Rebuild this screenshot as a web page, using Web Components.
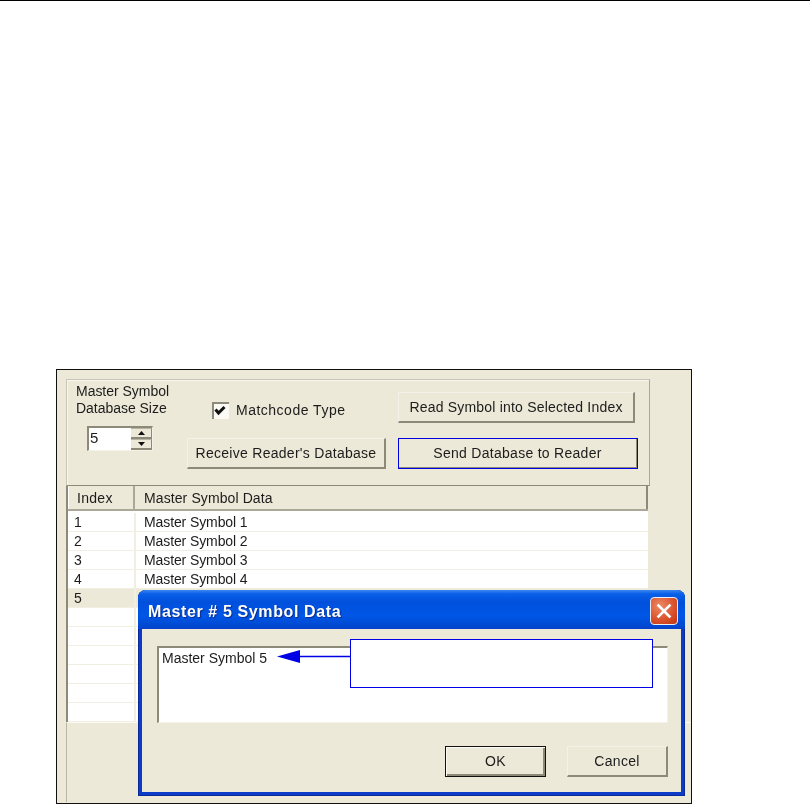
<!DOCTYPE html>
<html>
<head>
<meta charset="utf-8">
<title>Master Symbol Database</title>
<style>
  html, body { margin: 0; background: #fff; }
  body { font: 14px "Liberation Sans", Arial, sans-serif; color: #1c1c1c; height: 804px; overflow: hidden; }
</style>
</head>
<body>
<app-page>
  <legacy-window>
    <db-options></db-options>
    <symbol-table>
      <symbol-row index="1">Master Symbol 1</symbol-row>
      <symbol-row index="2">Master Symbol 2</symbol-row>
      <symbol-row index="3">Master Symbol 3</symbol-row>
      <symbol-row index="4">Master Symbol 4</symbol-row>
      <symbol-row index="5" selected></symbol-row>
      <symbol-row></symbol-row>
      <symbol-row></symbol-row>
      <symbol-row></symbol-row>
      <symbol-row></symbol-row>
      <symbol-row></symbol-row>
      <symbol-row></symbol-row>
    </symbol-table>
    <symbol-dialog heading="Master # 5 Symbol Data">Master Symbol 5</symbol-dialog>
  </legacy-window>
</app-page>

<script>
class AppPage extends HTMLElement {
  connectedCallback() {
    this.attachShadow({ mode: 'open' });
    this.shadowRoot.innerHTML = `
      <style>
        :host { display: block; }
        .rule { height: 1px; background: #000; }
        .content { padding: 368px 0 0 56px; }
      </style>
      <div class="rule"></div>
      <div class="content"><slot></slot></div>
    `;
  }
}

class LegacyWindow extends HTMLElement {
  connectedCallback() {
    this.attachShadow({ mode: 'open' });
    this.shadowRoot.innerHTML = `
      <style>
        :host {
          display: flex;
          flex-direction: column;
          position: relative;
          box-sizing: border-box;
          width: 636px;
          height: 435px;
          padding: 9px 0 0 9px;
          background: #ece9d8;
          border: 1px solid #111;
          filter: blur(0.35px);
        }
      </style>
      <slot></slot>
    `;
  }
}

class WinButton extends HTMLElement {
  connectedCallback() {
    this.attachShadow({ mode: 'open' });
    this.shadowRoot.innerHTML = `
      <style>
        :host {
          display: flex;
          align-items: center;
          justify-content: center;
          box-sizing: border-box;
          height: 31px;
          padding-bottom: 1px;
          background: #ece9d8;
          border-top: 1px solid #f4f2e8;
          border-left: 1px solid #f4f2e8;
          border-right: 2px solid #8d8a7a;
          border-bottom: 2px solid #8d8a7a;
          letter-spacing: var(--track, 0.28px);
        }
        :host([focused]) { outline: 1px solid #0000e6; outline-offset: -1px; }
        :host([default]) {
          border: 1px solid #111;
          box-shadow: inset 1px 1px 0 #fbfaf5, inset -2px -2px 0 #8d8a7a;
        }
      </style>
      <slot></slot>
    `;
  }
}

class SpinBox extends HTMLElement {
  connectedCallback() {
    this.attachShadow({ mode: 'open' });
    this.shadowRoot.innerHTML = `
      <style>
        :host {
          display: flex;
          box-sizing: border-box;
          width: 66px;
          height: 25px;
          background: #fff;
          border-top: 2px solid #8d8a7a;
          border-left: 2px solid #8d8a7a;
          border-right: 1px solid #f4f2e8;
          border-bottom: 1px solid #f4f2e8;
        }
        .value { flex: 1; padding-left: 1px; line-height: 20px; font-size: 15px; }
        .arrows { width: 21px; display: flex; flex-direction: column; }
        .arrows div {
          flex: 1;
          display: flex;
          align-items: center;
          justify-content: center;
          background: #ece9d8;
          border-top: 1px solid #b8b5a5;
          border-right: 1px solid #8d8a7a;
          border-bottom: 2px solid #8d8a7a;
        }
        svg { display: block; }
      </style>
      <div class="value"><slot></slot></div>
      <div class="arrows">
        <div><svg width="7" height="4"><path d="M3.5 0 7 4H0z" fill="#111"/></svg></div>
        <div><svg width="7" height="4"><path d="M0 0h7L3.5 4z" fill="#111"/></svg></div>
      </div>
    `;
  }
}

class CheckField extends HTMLElement {
  connectedCallback() {
    this.attachShadow({ mode: 'open' });
    this.shadowRoot.innerHTML = `
      <style>
        :host { display: flex; align-items: center; gap: 7px; height: 16px; letter-spacing: 0.5px; }
        .box {
          box-sizing: border-box;
          width: 17px;
          height: 17px;
          background: #fbfaf5;
          border-top: 2px solid #8d8a7a;
          border-left: 2px solid #8d8a7a;
        }
        svg { display: block; }
      </style>
      <div class="box">
        <svg width="15" height="15"><path d="M1.5 5.5 4.5 9 10.5 3" fill="none" stroke="#111" stroke-width="3"/></svg>
      </div>
      <span><slot></slot></span>
    `;
  }
}

class DbOptions extends HTMLElement {
  connectedCallback() {
    this.attachShadow({ mode: 'open' });
    this.shadowRoot.innerHTML = `
      <style>
        :host {
          flex: none;
          display: flex;
          box-sizing: border-box;
          width: 584px;
          height: 107px;
          padding-left: 9px;
          border-top: 1px solid #c9c6b6;
          border-left: 1px solid #c9c6b6;
          border-right: 1px solid #aca899;
          border-bottom: 1px solid #8d8a7a;
          box-shadow: inset 1px 1px 0 #f7f6ef;
        }
        .size { width: 111px; padding-top: 3px; letter-spacing: -0.03px; }
        .label { line-height: 17px; }
        spin-box { margin: 9px 0 0 11px; }
        .middle { width: 199px; margin-right: 12px; padding-top: 22px; }
        check-field { margin: 0 0 20px 25px; }
        .actions { display: flex; flex-direction: column; gap: 15px; padding-top: 12px; align-items: flex-start; }
      </style>
      <div class="size">
        <div class="label">Master Symbol<br>Database Size</div>
        <spin-box>5</spin-box>
      </div>
      <div class="middle">
        <check-field>Matchcode Type</check-field>
        <win-button>Receive Reader's Database</win-button>
      </div>
      <div class="actions">
        <win-button style="width:237px;--track:0.2px">Read Symbol into Selected Index</win-button>
        <win-button style="width:240px" focused>Send Database to Reader</win-button>
      </div>
    `;
  }
}

class SymbolTable extends HTMLElement {
  connectedCallback() {
    this.attachShadow({ mode: 'open' });
    this.shadowRoot.innerHTML = `
      <style>
        :host { display: block; flex: 1; }
        .frame {
          box-sizing: border-box;
          width: 582px;
          border-left: 2px solid #8d8a7a;
          background: #fff;
        }
        .head { display: flex; height: 25px; line-height: 25px; background: #ece9d8; border-bottom: 2px solid #aca899; box-sizing: border-box; }
        .head div { box-sizing: border-box; }
        .head .index { width: 67px; padding-left: 8px; border-right: 2px solid #aca899; border-left: 1px solid #fff; letter-spacing: 0.3px; }
        .head .data { flex: 1; padding-left: 9px; border-right: 2px solid #8d8a7a; letter-spacing: 0.1px; }
        .rows { padding-top: 2px; }
        .rest {
          height: 80px;
          box-sizing: border-box;
          border-left: 1px solid #b8b5a5;
          border-top: 1px solid #fbfaf5;
        }
      </style>
      <div class="frame">
        <div class="head"><div class="index">Index</div><div class="data">Master Symbol Data</div></div>
        <div class="rows"><slot></slot></div>
      </div>
      <div class="rest"></div>
    `;
  }
}

class SymbolRow extends HTMLElement {
  connectedCallback() {
    this.attachShadow({ mode: 'open' });
    this.shadowRoot.innerHTML = `
      <style>
        :host { display: flex; box-sizing: border-box; height: 19px; line-height: 18px; border-bottom: 1px solid #f1efe2; }
        .index { box-sizing: border-box; width: 68px; padding-left: 6px; border-right: 2px solid #f1efe2; }
        .data { flex: 1; padding-left: 8px; letter-spacing: -0.1px; }
        :host([selected]) .index, :host([selected]) .data { background: #ece9d8; }
      </style>
      <div class="index">${this.getAttribute('index') || ''}</div>
      <div class="data"><slot></slot></div>
    `;
  }
}

class SymbolDialog extends HTMLElement {
  connectedCallback() {
    this.attachShadow({ mode: 'open' });
    this.shadowRoot.innerHTML = `
      <style>
        :host {
          position: absolute;
          left: 81px;
          top: 220px;
          width: 547px;
          height: 206px;
          display: flex;
          flex-direction: column;
          box-sizing: border-box;
          padding: 0 4px 4px;
          background: #0a3cc8;
          border-radius: 8px 8px 0 0;
          box-shadow: inset -1px 0 0 #0a2a9a, inset 1px 0 0 #0a2a9a, inset 0 -1px 0 #0a2a9a;
        }
        .title {
          flex: none;
          box-sizing: border-box;
          height: 39px;
          margin: 0 -4px;
          padding: 7px 7px 0 10px;
          display: flex;
          align-items: flex-start;
          justify-content: space-between;
          border-radius: 8px 8px 0 0;
          background: linear-gradient(#3a86f0 0, #0a5fe8 4px, #0050dc 12px, #0056e6 26px, #0048d0 36px, #0a3fc8 39px);
          color: #fff;
          font-weight: bold;
          font-size: 16px;
          letter-spacing: 0.62px;
          line-height: 30px;
          text-shadow: 1px 1px 1px #0a2a8c;
        }
        .close {
          box-sizing: border-box;
          width: 28px;
          height: 28px;
          border: 1px solid #e9eefb;
          border-radius: 4px;
          background: radial-gradient(circle at 35% 30%, #ec8a66, #d9502a 60%, #bc3410);
          display: flex;
          align-items: center;
          justify-content: center;
        }
        svg { display: block; }
        .body {
          flex: 1;
          display: flex;
          flex-direction: column;
          padding: 17px 13px 15px 15px;
          background: #ece9d8;
        }
        .input {
          box-sizing: border-box;
          height: 77px;
          padding: 2px 0 0 3px;
          background: #fff;
          border-top: 2px solid #8d8a7a;
          border-left: 2px solid #8d8a7a;
          border-right: 1px solid #f4f2e8;
          border-bottom: 1px solid #f4f2e8;
          line-height: 16px;
        }
        .actions { display: flex; justify-content: flex-end; gap: 21px; margin-top: 23px; }
        .actions win-button { width: 101px; }
        .note {
          position: absolute;
          left: 212px;
          top: 49px;
          box-sizing: border-box;
          width: 303px;
          height: 49px;
          background: #fff;
          border: 1px solid #0000e6;
        }
        .pointer { position: absolute; left: 139px; top: 60px; }
      </style>
      <div class="title">
        <span>${this.getAttribute('heading') || ''}</span>
        <div class="close">
          <svg width="18" height="18"><path d="M3.5 3.5 14.5 14.5M14.5 3.5 3.5 14.5" stroke="#fff" stroke-width="2.6" stroke-linecap="square"/></svg>
        </div>
      </div>
      <div class="body">
        <div class="input"><slot></slot></div>
        <div class="actions">
          <win-button default>OK</win-button>
          <win-button>Cancel</win-button>
        </div>
      </div>
      <div class="note"></div>
      <svg class="pointer" width="74" height="14"><path d="M0 6.5 23 0V13z" fill="#0000e6"/><path d="M22 6.5H74" stroke="#0000e6" stroke-width="1.3"/></svg>
    `;
  }
}

// children first so upgrades find their definitions
customElements.define('win-button', WinButton);
customElements.define('spin-box', SpinBox);
customElements.define('check-field', CheckField);
customElements.define('db-options', DbOptions);
customElements.define('symbol-row', SymbolRow);
customElements.define('symbol-table', SymbolTable);
customElements.define('symbol-dialog', SymbolDialog);
customElements.define('legacy-window', LegacyWindow);
customElements.define('app-page', AppPage);
</script>
</body>
</html>
